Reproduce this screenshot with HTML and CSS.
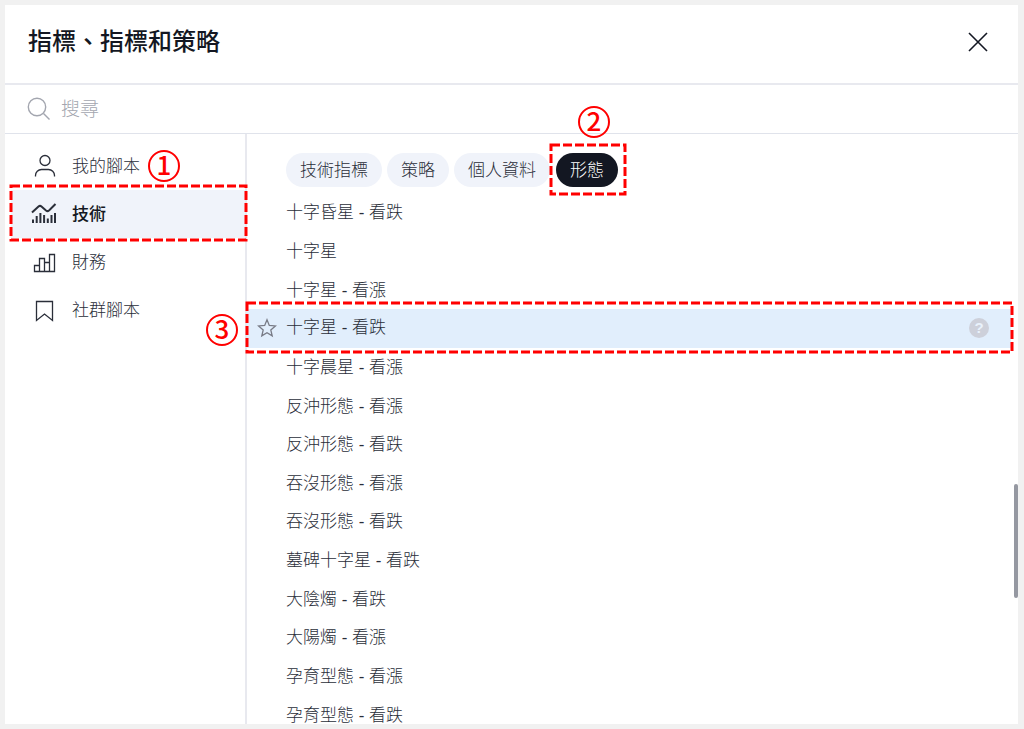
FILE: index.html
```
<!DOCTYPE html>
<html lang="zh-Hant">
<head>
    <meta charset="UTF-8">
    <meta name="viewport" content="width=device-width, initial-scale=1.0">
    <title>指標、指標和策略</title>
    <link rel="stylesheet" href="styles.css">
</head>
<body>
    <div class="dialog">
        <header class="dialog-header">
            <h1>指標、指標和策略</h1>
            <button class="close" type="button" aria-label="關閉">
                <svg width="22" height="22" viewBox="0 0 22 22"><path d="M2 2l18 18M20 2L2 20"/></svg>
            </button>
        </header>

        <div class="search">
            <svg width="24" height="24" viewBox="0 0 24 24"><circle cx="10" cy="10" r="8.7"/><path d="M16.5 16.5l6 6"/></svg>
            <input type="text" placeholder="搜尋" aria-label="搜尋">
        </div>

        <div class="dialog-body">
            <nav class="sidebar">
                <a class="side-item" href="#">
                    <svg width="28" height="28" viewBox="0 0 28 28"><circle cx="15" cy="8.500" r="5"/><path d="M5.500 24.500v-1a6 6 0 0 1 6-6h7a6 6 0 0 1 6 6v1"/></svg>
                    <span class="side-label">我的腳本<span class="step step-1">1</span></span>
                </a>
                <a class="side-item active" href="#">
                    <svg width="28" height="28" viewBox="0 0 28 28"><path class="thick" d="M2 12.500l6.500-6q1.500-1.200 3 0l4.500 4q1.500 1.200 3 0L25.500 4"/><path class="thick" d="M3 23v-3.500M6.700 23v-7M10.400 23V13M14.100 23v-8M17.800 23v-4.500M21.500 23v-8M25 23V13"/></svg>
                    <span class="side-label">技術</span>
                    <svg class="marker"><rect width="100%" height="100%"/></svg>
                </a>
                <a class="side-item" href="#">
                    <svg width="28" height="28" viewBox="0 0 28 28"><path d="M4.500 23.500v-6h5v6zM9.500 23.500v-13h5v13zM14.500 14.500h5M19.500 23.500v-17h5v17zM14.500 23.500h5"/></svg>
                    <span class="side-label">財務</span>
                </a>
                <a class="side-item" href="#">
                    <svg width="28" height="28" viewBox="0 0 28 28"><path d="M6.500 5.500h16v19l-8-6.500-8 6.500z"/></svg>
                    <span class="side-label">社群腳本</span>
                </a>
            </nav>

            <main class="content">
                <div class="tabs">
                    <button class="tab" type="button">技術指標</button>
                    <button class="tab" type="button">策略</button>
                    <button class="tab" type="button">個人資料</button>
                    <button class="tab selected" type="button">
                        形態
                        <svg class="marker"><rect width="100%" height="100%"/></svg>
                        <span class="step step-2">2</span>
                    </button>
                </div>
                <ul class="list">
                    <li>十字昏星 - 看跌</li>
                    <li>十字星</li>
                    <li>十字星 - 看漲</li>
                    <li class="hover">
                        <button class="star" type="button" aria-label="加入收藏">
                            <svg width="20" height="20" viewBox="0 0 20 20"><path d="M10 1.800l2.300 5.600 6.100.500-4.600 4 1.400 6-5.200-3.200-5.200 3.200 1.400-6-4.600-4 6.100-.500z"/></svg>
                        </button>
                        十字星 - 看跌
                        <button class="help" type="button" aria-label="說明">?</button>
                        <svg class="marker"><rect width="100%" height="100%"/></svg>
                        <span class="step step-3">3</span>
                    </li>
                    <li>十字晨星 - 看漲</li>
                    <li>反沖形態 - 看漲</li>
                    <li>反沖形態 - 看跌</li>
                    <li>吞沒形態 - 看漲</li>
                    <li>吞沒形態 - 看跌</li>
                    <li>墓碑十字星 - 看跌</li>
                    <li>大陰燭 - 看跌</li>
                    <li>大陽燭 - 看漲</li>
                    <li>孕育型態 - 看漲</li>
                    <li>孕育型態 - 看跌</li>
                </ul>
                <div class="scroll-thumb"></div>
            </main>
        </div>
    </div>
</body>
</html>
```
FILE: styles.css
```
* {
    box-sizing: border-box;
}
body {
    margin: 0;
    padding: 5px 6px 5px 5px;
    height: 100vh;
    background-color: #f1f1f1;
    color: #2a2e39;
    font-family: "Liberation Sans", "Noto Sans CJK TC", sans-serif;
    font-size: 17px;
    font-weight: 300;
    line-height: 24px;
}
button,
input {
    font: inherit;
    color: inherit;
    border: none;
    background: none;
    padding: 0;
}
button {
    cursor: pointer;
}
svg {
    display: block;
    flex: none;
    fill: none;
    stroke: #2a2e39;
    stroke-width: 1.3;
}
.dialog {
    display: flex;
    flex-direction: column;
    height: 100%;
    background-color: #fff;
    overflow: hidden;
}
.dialog-header {
    display: flex;
    align-items: center;
    justify-content: space-between;
    height: 80px;
    padding: 0 29px 4px 23px;
    border-bottom: 2px solid #e8e9ef;
    flex: none;
}
h1 {
    margin: 0;
    font-size: 24px;
    font-weight: 500;
    line-height: 36px;
    color: #131722;
}
.close svg {
    stroke: #131722;
    stroke-width: 1.6;
}
.search {
    display: flex;
    align-items: center;
    gap: 10px;
    height: 49px;
    padding: 0 22px;
    border-bottom: 1px solid #e0e3eb;
    flex: none;
}
.search svg {
    stroke: #a3a6af;
    stroke-width: 1.4;
}
.search input {
    flex: 1;
    padding-top: 2px;
    font-size: 19px;
    outline: none;
}
.search input::placeholder {
    color: #a3a6af;
    opacity: 1;
}

/* left column */
.dialog-body {
    display: flex;
    flex: 1;
    min-height: 0;
}
.sidebar {
    width: 242px;
    padding-top: 8px;
    border-right: 2px solid #e8e9ef;
    flex: none;
}
.side-item {
    position: relative;
    display: flex;
    align-items: center;
    gap: 14px;
    height: 48px;
    margin-left: 6px;
    padding-left: 19px;
    color: #2a2e39;
    text-decoration: none;
}
.side-item.active {
    background-color: #f0f3fa;
    color: #131722;
    font-weight: 500;
}
.side-label {
    position: relative;
    padding-top: 2px;
}
.thick {
    stroke-width: 2;
}

/* right column */
.content {
    position: relative;
    display: flex;
    flex-direction: column;
    flex: 1;
    padding-top: 19px;
}
.tabs {
    display: flex;
    gap: 5px;
    padding-left: 39px;
    margin-bottom: 6px;
}
.tab {
    position: relative;
    height: 34px;
    padding: 2px 14px 0;
    border-radius: 17px;
    background-color: #f0f3fa;
}
.tab.selected {
    margin-left: 1px;
    background-color: #131722;
    color: #fff;
}
.list {
    display: grid;
    flex: 1;
    grid-auto-rows: minmax(38px, 1fr);
    margin: 0 7px -10px 0;
    padding: 0;
    list-style: none;
}
.list li {
    position: relative;
    display: flex;
    align-items: center;
    padding: 2px 22px 0 39px;
}
.list li.hover {
    background-color: #e1eefc;
    padding: 0 22px 0 10px;
}
.star {
    margin-right: 9px;
}
.star svg {
    stroke: #787b86;
}
.help {
    width: 20px;
    height: 20px;
    margin-left: auto;
    border-radius: 50%;
    background-color: #cdd0da;
    color: #e9f2fc;
    font-size: 15px;
    font-weight: bold;
    line-height: 20px;
}
.scroll-thumb {
    position: absolute;
    bottom: 126px;
    right: 0;
    width: 4px;
    height: 114px;
    border-radius: 2px;
    background-color: #9598a1;
}

/* numbered steps and their dashed frames */
.marker {
    position: absolute;
    overflow: visible;
    pointer-events: none;
    stroke: #f00;
    stroke-width: 3;
    stroke-dasharray: 9 3;
}
.side-item .marker {
    top: -4px;
    left: 0;
    width: 235px;
    height: 54px;
}
.tab .marker {
    top: -8px;
    left: -5px;
    width: calc(100% + 12px);
    height: 49px;
}
.list .marker {
    top: -6px;
    left: 0;
    width: calc(100% + 1px);
    height: 49px;
}
.step {
    position: absolute;
    width: 32px;
    height: 32px;
    border: 2px solid #f00;
    border-radius: 50%;
    color: #f00;
    font-family: "Noto Sans CJK TC", sans-serif;
    font-size: 26px;
    font-weight: 500;
    line-height: 24px;
    text-align: center;
}
.step-1 {
    top: -3px;
    left: 76px;
}
.step-2 {
    top: -47px;
    left: 22px;
}
.step-3 {
    top: 5px;
    left: -41px;
}
```
